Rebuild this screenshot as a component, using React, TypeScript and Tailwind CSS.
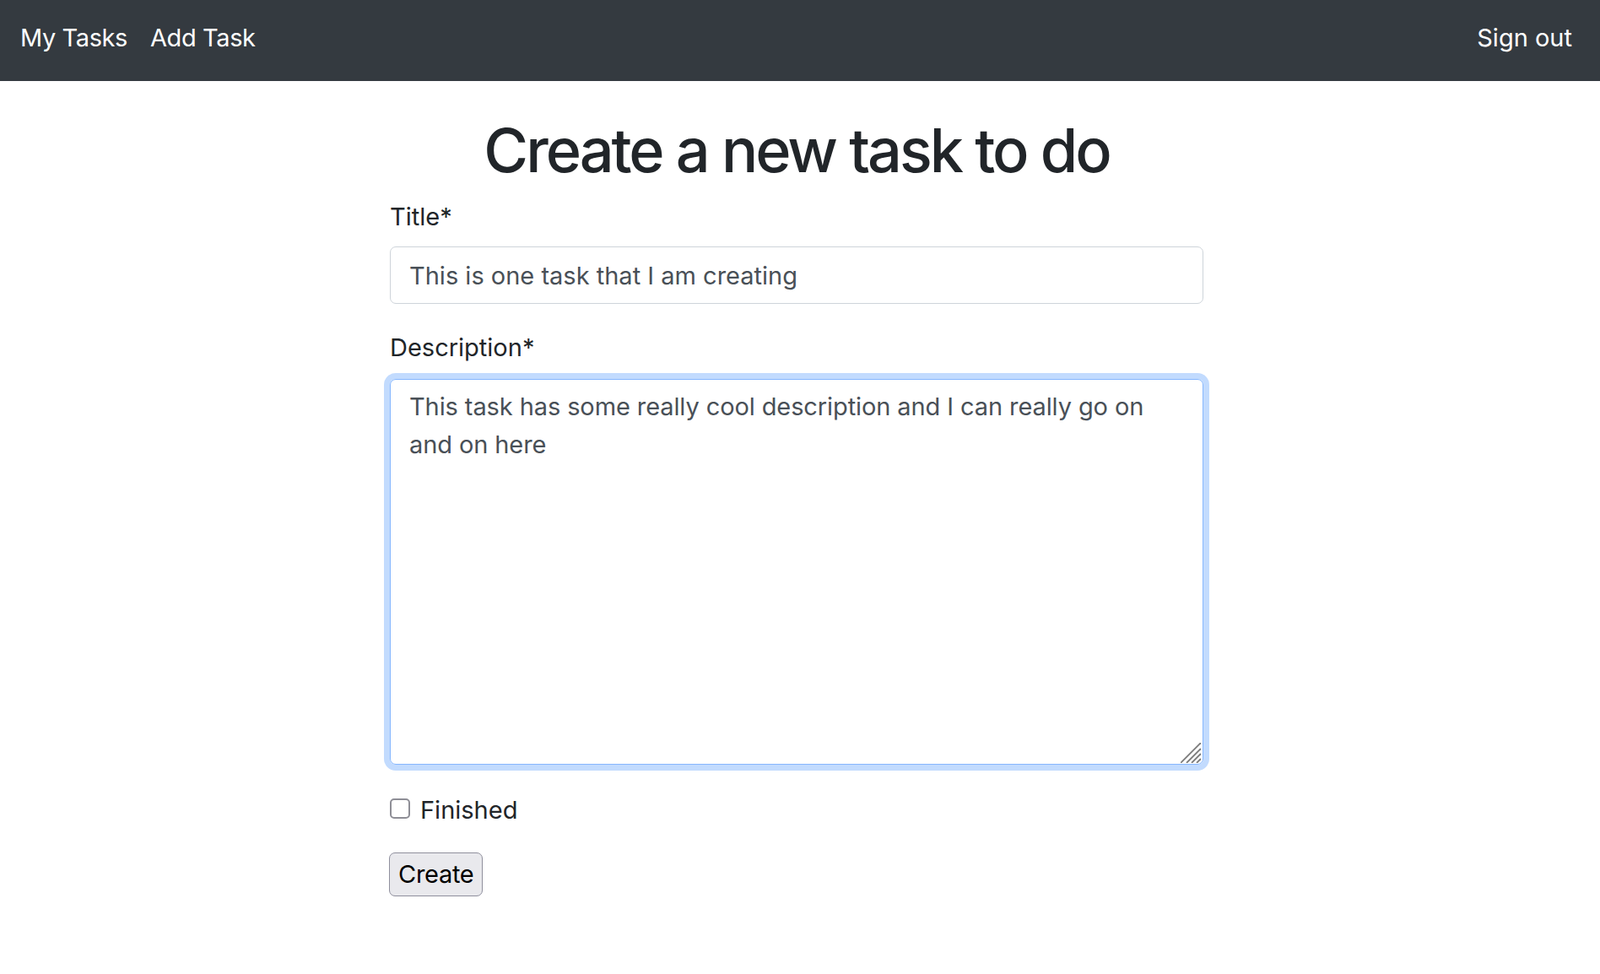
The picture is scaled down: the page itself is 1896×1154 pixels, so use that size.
import { useEffect, useRef } from "react"

export default function App() {
  const descRef = useRef<HTMLTextAreaElement>(null)

  useEffect(() => {
    const el = descRef.current
    if (el) {
      el.focus()
      const end = el.value.length
      el.setSelectionRange(end, end)
    }
  }, [])

  return (
    <div className="min-h-screen bg-white font-['Inter',sans-serif] text-[#212529]">
      {/* Top navbar */}
      <nav className="flex h-[96px] items-start justify-between bg-[#343a40] pl-[10px] pr-[19px] pt-[23px]">
        <div className="flex">
          <a href="#" className="px-[14px] text-[29px] leading-[44px] tracking-[-0.4px] text-white">
            My Tasks
          </a>
          <a href="#" className="px-[13px] text-[29px] leading-[44px] tracking-[-0.4px] text-white">
            Add Task
          </a>
        </div>
        <a href="#" className="px-[14px] text-[29px] leading-[44px] text-white">
          Sign out
        </a>
      </nav>

      <main className="mx-auto w-[972px] pr-[8px]">
        <h1 className="mt-[39px] mb-[14px] text-center text-[72px] font-medium leading-[86px] tracking-[-3px]">
          Create a new task to do
        </h1>

        <form onSubmit={(e) => e.preventDefault()}>
          <div className="mb-[30px]">
            <label htmlFor="title" className="mb-[13px] block text-[29px] leading-[44px]">
              Title*
            </label>
            <input
              id="title"
              type="text"
              defaultValue="This is one task that I am creating"
              className="block h-[68px] w-full rounded-[7px] border border-[#ced4da] px-[22px] text-[29px] text-[#495057] outline-none"
            />
          </div>

          <div className="mb-[32px]">
            <label htmlFor="description" className="mb-[15px] block text-[29px] leading-[44px]">
              Description*
            </label>
            <div className="relative">
              <textarea
                id="description"
                ref={descRef}
                defaultValue="This task has some really cool description and I can really go on and on here"
                className="block h-[457px] w-full resize-none rounded-[7px] border border-[#86b7fe] px-[22px] pt-[9px] text-[29px] leading-[45px] tracking-[-0.1px] text-[#495057] caret-[#212529] shadow-[0_0_0_7px_#c2dbfe] outline-none"
              />
              {/* resize grip */}
              <svg
                className="pointer-events-none absolute right-[3px] bottom-[2px]"
                width="24"
                height="24"
                viewBox="0 0 24 24"
              >
                <g stroke="#7a7a7a" strokeWidth="1.8">
                  <line x1="24" y1="0" x2="0" y2="24" />
                  <line x1="24" y1="7" x2="7" y2="24" />
                  <line x1="24" y1="13" x2="13" y2="24" />
                  <line x1="24" y1="19" x2="19" y2="24" />
                </g>
              </svg>
            </div>
          </div>

          <div className="mb-[28px] flex items-start gap-[12px]">
            <input
              id="finished"
              type="checkbox"
              className="mt-[8px] h-[24px] w-[24px] appearance-none rounded-[5px] border-[2.5px] border-[#8e8e96] bg-white"
            />
            <label htmlFor="finished" className="text-[29px] leading-[44px]">
              Finished
            </label>
          </div>

          <button
            type="submit"
            className="ml-[-1px] h-[52px] rounded-[7px] border border-[#8f8f9d] bg-[#e9e9ed] px-[10px] text-[29px] leading-[40px] tracking-[-0.3px] text-black"
          >
            Create
          </button>
        </form>
      </main>
    </div>
  )
}
